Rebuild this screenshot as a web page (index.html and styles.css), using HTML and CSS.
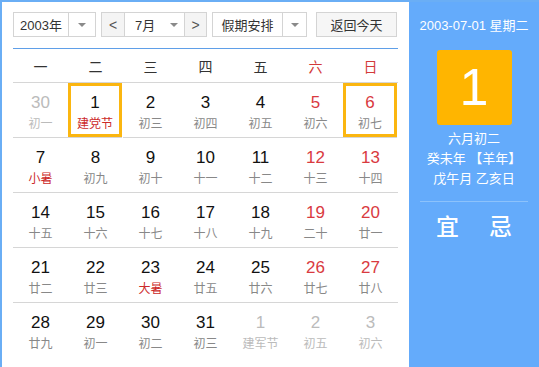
FILE: index.html
```html
<!doctype html>
<html lang="zh-CN">
  <head>
    <meta charset="UTF-8" />
    <title>万年历</title>
    <link rel="stylesheet" href="styles.css">
  </head>
  <body>
    <div class="calendar">
      <div class="main">
        <div class="toolbar">
          <div class="select year">
            <span class="label">2003年</span>
            <span class="arrow"><i></i></span>
          </div>
          <div class="select month">
            <span class="step">&lt;</span>
            <span class="label">7月</span>
            <span class="arrow"><i></i></span>
            <span class="step">&gt;</span>
          </div>
          <div class="select holiday">
            <span class="label">假期安排</span>
            <span class="arrow"><i></i></span>
          </div>
          <button class="today">返回今天</button>
        </div>

        <div class="weekdays">
          <span>一</span><span>二</span><span>三</span><span>四</span><span>五</span>
          <span class="weekend">六</span><span class="weekend">日</span>
        </div>

        <div class="days">
          <div class="day other"><b>30</b><em>初一</em></div>
          <div class="day active"><b>1</b><em class="fest">建党节</em></div>
          <div class="day"><b>2</b><em>初三</em></div>
          <div class="day"><b>3</b><em>初四</em></div>
          <div class="day"><b>4</b><em>初五</em></div>
          <div class="day weekend"><b>5</b><em>初六</em></div>
          <div class="day weekend active"><b>6</b><em>初七</em></div>

          <div class="day"><b>7</b><em class="fest">小暑</em></div>
          <div class="day"><b>8</b><em>初九</em></div>
          <div class="day"><b>9</b><em>初十</em></div>
          <div class="day"><b>10</b><em>十一</em></div>
          <div class="day"><b>11</b><em>十二</em></div>
          <div class="day weekend"><b>12</b><em>十三</em></div>
          <div class="day weekend"><b>13</b><em>十四</em></div>

          <div class="day"><b>14</b><em>十五</em></div>
          <div class="day"><b>15</b><em>十六</em></div>
          <div class="day"><b>16</b><em>十七</em></div>
          <div class="day"><b>17</b><em>十八</em></div>
          <div class="day"><b>18</b><em>十九</em></div>
          <div class="day weekend"><b>19</b><em>二十</em></div>
          <div class="day weekend"><b>20</b><em>廿一</em></div>

          <div class="day"><b>21</b><em>廿二</em></div>
          <div class="day"><b>22</b><em>廿三</em></div>
          <div class="day"><b>23</b><em class="fest">大暑</em></div>
          <div class="day"><b>24</b><em>廿五</em></div>
          <div class="day"><b>25</b><em>廿六</em></div>
          <div class="day weekend"><b>26</b><em>廿七</em></div>
          <div class="day weekend"><b>27</b><em>廿八</em></div>

          <div class="day last"><b>28</b><em>廿九</em></div>
          <div class="day last"><b>29</b><em>初一</em></div>
          <div class="day last"><b>30</b><em>初二</em></div>
          <div class="day last"><b>31</b><em>初三</em></div>
          <div class="day last other"><b>1</b><em>建军节</em></div>
          <div class="day last other"><b>2</b><em>初五</em></div>
          <div class="day last other"><b>3</b><em>初六</em></div>
        </div>
      </div>

      <div class="side">
        <div class="side-date">2003-07-01 星期二</div>
        <div class="big-day">1</div>
        <div class="lunar">
          <p>六月初二</p>
          <p>癸未年 【羊年】</p>
          <p>戊午月 乙亥日</p>
        </div>
        <div class="yiji">
          <span>宜</span>
          <span>忌</span>
        </div>
      </div>
    </div>
  </body>
</html>
```

FILE: styles.css
```css
body {
  margin: 0;
  font-family: "Liberation Sans", "Noto Sans CJK SC", sans-serif;
  background: #fff;
  color: #222;
}
.calendar {
  display: flex;
  width: 537px;
  height: 365px;
  border-top: 2px solid #6aaef5;
  border-left: 2px solid #6aaef5;
  overflow: hidden;
}
.main {
  width: 385px;
  padding: 10px 11px 0 11px;
  background: #fff;
}
.toolbar {
  display: flex;
  align-items: center;
  height: 25px;
  font-size: 13px;
  color: #333;
}
.select {
  display: flex;
  height: 23px;
  border: 1px solid #d4d4d4;
  background: #fff;
}
.select span {
  display: flex;
  align-items: center;
  justify-content: center;
}
.select .arrow {
  border-left: 1px solid #d4d4d4;
}
.select .arrow i {
  width: 0;
  height: 0;
  border-left: 4px solid transparent;
  border-right: 4px solid transparent;
  border-top: 4px solid #8a8a8a;
}
.year .label {
  width: 54px;
}
.year .arrow {
  width: 26px;
}
.month {
  margin-left: 5px;
}
.month .step {
  width: 22px;
  background: #f4f4f4;
  color: #555;
  font-size: 14px;
}
.month .step:first-child {
  border-right: 1px solid #d4d4d4;
}
.month .step:last-child {
  width: 21px;
  border-left: 1px solid #d4d4d4;
}
.month .label {
  justify-content: flex-start;
  padding-left: 10px;
  width: 28px;
}
.month .arrow {
  border-left: none;
  width: 21px;
}
.holiday {
  margin-left: 5px;
}
.holiday .label {
  width: 69px;
}
.holiday .arrow {
  width: 23px;
}
.today {
  margin-left: 9px;
  width: 81px;
  height: 25px;
  border: 1px solid #d4d4d4;
  background: #f6f6f6;
  font-family: inherit;
  font-size: 13px;
  color: #333;
  padding: 0;
}
.weekdays {
  display: grid;
  grid-template-columns: repeat(7, 55px);
  margin-top: 11px;
  border-top: 1px solid #5f9fe8;
  border-bottom: 1px solid #d6d6d6;
  height: 33px;
  align-items: center;
  text-align: center;
  font-size: 14px;
  color: #333;
}
.weekdays .weekend {
  color: #d33a3a;
}
.days {
  display: grid;
  grid-template-columns: repeat(7, 55px);
  grid-auto-rows: 55px;
}
.day {
  display: flex;
  flex-direction: column;
  align-items: center;
  border-bottom: 1px solid #d6d6d6;
  box-sizing: border-box;
}
.day.last {
  border-bottom: none;
}
.day b {
  font-weight: normal;
  font-size: 17px;
  line-height: 20px;
  margin-top: 10px;
  color: #111;
}
.day em {
  font-style: normal;
  font-size: 12px;
  line-height: 16px;
  margin-top: 3px;
  color: #888;
}
.day.weekend b {
  color: #d93a3f;
}
.day em.fest {
  color: #cc2a2a;
}
.day.other b,
.day.other em {
  color: #bbb;
}
.day.active {
  box-shadow: inset 0 0 0 3px #fbb610;
  width: 54px;
}
.side {
  width: 130px;
  background: #64abfb;
  color: #fff;
  text-align: center;
}
.side-date {
  margin-top: 16px;
  font-size: 13px;
  line-height: 16px;
}
.big-day {
  width: 75px;
  height: 75px;
  margin: 16px auto 0;
  background: #ffb500;
  border-radius: 3px;
  font-size: 52px;
  line-height: 75px;
}
.lunar {
  margin-top: 4px;
  font-size: 13px;
}
.lunar p {
  margin: 0;
  line-height: 20px;
}
.yiji {
  display: flex;
  justify-content: space-between;
  margin: 12px 11px 0;
  padding: 10px 16px 0;
  border-top: 1px solid #8cc2fb;
  font-size: 23px;
  font-weight: 500;
  line-height: 30px;
}
```
